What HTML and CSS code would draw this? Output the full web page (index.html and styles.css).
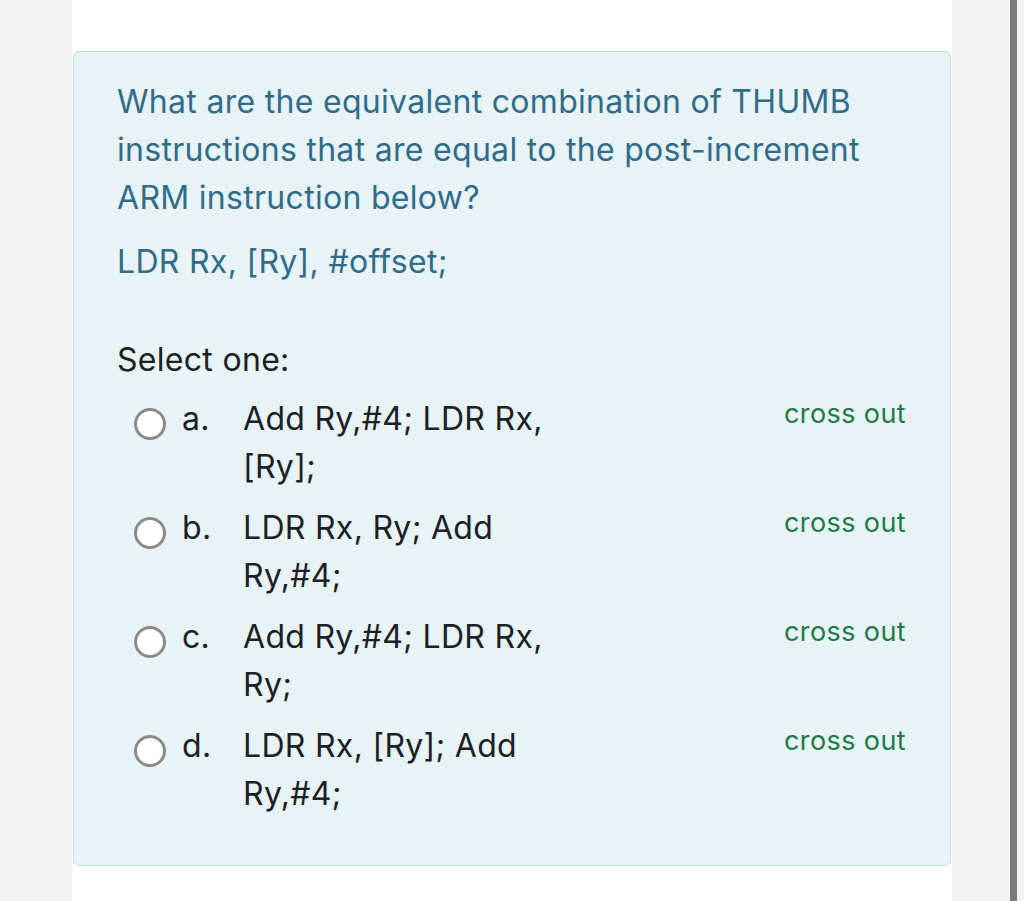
FILE: index.html
```html
<!DOCTYPE html>
<html lang="en">
<head>
<meta charset="utf-8">
<title>Question</title>
<link rel="stylesheet" href="styles.css">
</head>
<body>
<div class="page">
  <div class="gutter"></div>
  <main class="main">
    <section class="qbox">
      <div class="qtext">
        <p>What are the equivalent combination of THUMB instructions that are equal to the post-increment ARM instruction below?</p>
        <p class="code">LDR Rx, [Ry], #offset;</p>
      </div>
      <div class="prompt">Select one:</div>
      <div class="answers">
        <div class="opt">
          <span class="radio"></span>
          <span class="letter">a.</span>
          <span class="text">Add Ry,#4; LDR Rx, [Ry];</span>
          <span class="cross">cross out</span>
        </div>
        <div class="opt">
          <span class="radio"></span>
          <span class="letter">b.</span>
          <span class="text">LDR Rx, Ry; Add Ry,#4;</span>
          <span class="cross">cross out</span>
        </div>
        <div class="opt">
          <span class="radio"></span>
          <span class="letter">c.</span>
          <span class="text">Add Ry,#4; LDR Rx, Ry;</span>
          <span class="cross">cross out</span>
        </div>
        <div class="opt">
          <span class="radio"></span>
          <span class="letter">d.</span>
          <span class="text">LDR Rx, [Ry]; Add Ry,#4;</span>
          <span class="cross">cross out</span>
        </div>
      </div>
    </section>
  </main>
  <div class="rside"></div>
  <div class="bar"></div>
  <div class="edge"></div>
</div>
</body>
</html>
```
FILE: styles.css
```css
html, body {
  margin: 0;
  padding: 0;
}
body {
  background: #f2f2f2;
  font-family: Inter, "Noto Sans", sans-serif;
  color: #1d2125;
}
.page {
  display: flex;
  height: 901px;
  overflow: hidden;
}
.gutter {
  width: 72px;
  flex: none;
  background: #f2f2f2;
}
.main {
  width: 880px;
  flex: none;
  background: #ffffff;
  padding: 51px 1px 0;
  box-sizing: border-box;
}
.rside {
  width: 58px;
  flex: none;
  background: #f2f2f2;
}
.bar {
  width: 7px;
  flex: none;
  background: #7a7a7a;
}
.edge {
  flex: 1;
  background: #f2f2f2;
}
.qbox {
  height: 815px;
  box-sizing: border-box;
  background: #e7f3f5;
  border: 1px solid #bfe0e6;
  border-radius: 6px;
  padding: 26px 44px 0 43px;
}
.qtext {
  color: #316c8a;
  font-size: 32px;
  line-height: 48px;
  letter-spacing: 0.3px;
}
.qtext p {
  margin: 0 0 16px;
}
.qtext .code {
  margin-bottom: 0;
}
.prompt {
  margin-top: 50px;
  font-size: 32px;
  line-height: 48px;
  letter-spacing: 0.3px;
}
.answers {
  margin-top: 11px;
  display: flex;
  flex-direction: column;
  gap: 13px;
}
.opt {
  display: flex;
  align-items: flex-start;
  font-size: 32px;
  line-height: 48px;
  letter-spacing: 0.3px;
}
.radio {
  flex: none;
  width: 26px;
  height: 26px;
  border: 3px solid #8a8a8a;
  border-radius: 50%;
  background: #ffffff;
  margin: 13px 0 0 17px;
}
.letter {
  flex: none;
  width: 61px;
  margin-left: 16px;
}
.text {
  flex: none;
  width: 320px;
}
.cross {
  margin-left: auto;
  margin-top: 2px;
  color: #1f7a4a;
  font-size: 27px;
  line-height: 34px;
  letter-spacing: 0.4px;
}
```
